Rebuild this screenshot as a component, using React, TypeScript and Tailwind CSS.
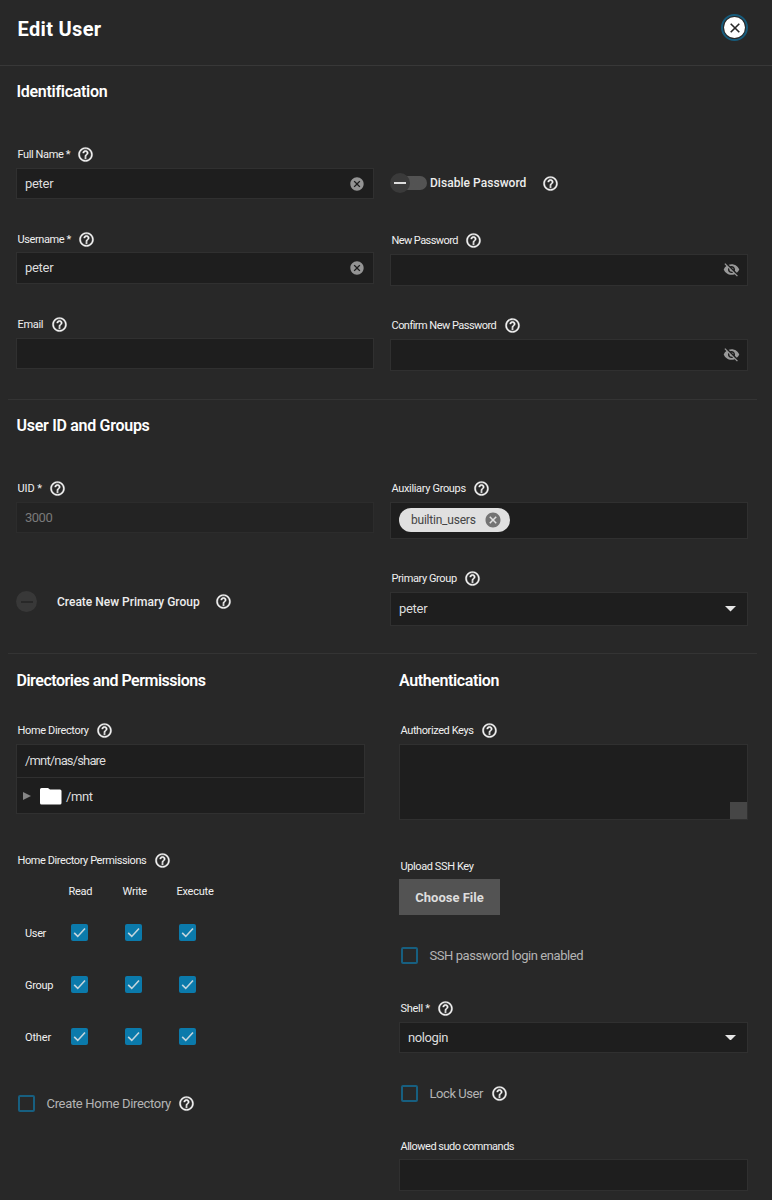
import type { ReactNode } from "react";
import { MdCancel, MdVisibilityOff } from "react-icons/md";

const Help = ({ className = "ml-[7.5px]" }: { className?: string }) => (
  <svg width="17" height="17" viewBox="0 0 24 24" strokeWidth="0.5" className={`shrink-0 fill-[#f5f5f5] stroke-[#f5f5f5] ${className}`}>
    <path d="M11 18h2v-2h-2v2zm1-16C6.480 2 2 6.480 2 12s4.480 10 10 10 10-4.480 10-10S17.520 2 12 2zm0 18c-4.410 0-8-3.590-8-8s3.590-8 8-8 8 3.590 8 8-3.590 8-8 8zm0-14c-2.210 0-4 1.790-4 4h2c0-1.100.9-2 2-2s2 .9 2 2c0 2-3 1.750-3 5h2c0-2.250 3-2.500 3-5 0-2.210-1.790-4-4-4z" />
  </svg>
);

function Label({ text, className = "", help = true, track = "tracking-[-0.4px]" }: { text: string; className?: string; help?: boolean; track?: string }) {
  return (
    <div className={`flex h-[17px] items-center pl-[1.5px] text-[11px] text-[#f0f0f0] ${className}`}>
      <span className={`pt-[2px] ${track}`}>{text}</span>
      {help && <Help />}
    </div>
  );
}

function Box({ children, className = "" }: { children?: ReactNode; className?: string }) {
  return (
    <div className={`flex items-center border border-[#303030] bg-[#1e1e1e] text-[13px] text-[#dcdcdc] ${className}`}>
      {children}
    </div>
  );
}

function Heading({ text, className }: { text: string; className: string }) {
  return <h2 className={`h-[21px] text-[16px] leading-[21px] font-semibold text-white ${className}`}>{text}</h2>;
}

const Arrow = () => (
  <svg width="11" height="5.5" viewBox="0 0 10 5" className="mr-[11px] ml-auto fill-[#e6e6e6]">
    <path d="M0 0h10L5 5z" />
  </svg>
);

const Checked = () => (
  <span className="flex size-[17px] items-center justify-center rounded-[2px] bg-[#0b7aab]">
    <svg width="15" height="15" viewBox="0 0 24 24" fill="none" stroke="#c3d5dd" strokeWidth="2.6">
      <path d="M3.5 12.7l5.7 5.6L20.8 5.6" />
    </svg>
  </span>
);

const Unchecked = () => <span className="size-[17px] shrink-0 rounded-[2px] border-2 border-[#175f80]" />;

const rows = [
  { name: "User", className: "mt-[25px]", track: "tracking-[-0.34px]" },
  { name: "Group", className: "mt-[35px]", track: "tracking-[-0.32px]" },
  { name: "Other", className: "mt-[35px]", track: "tracking-[-0.16px]" },
];

export default function App() {
  return (
    <div className="h-[1200px] w-[772px] overflow-hidden bg-[#282828] font-['Roboto',sans-serif] whitespace-nowrap">
      <header className="flex h-[66px] items-center justify-between border-b border-[#383838] pr-[24px] pb-[10px] pl-[17.5px]">
        <h1 className="pt-[2px] text-[20px] font-bold tracking-[0.34px] text-white">Edit User</h1>
        <button className="flex size-[27px] items-center justify-center rounded-full border-2 border-[#175b7b]">
          <span className="flex size-[21px] items-center justify-center rounded-full bg-white">
            <svg width="10" height="10" viewBox="0 0 10 10" stroke="#282828" strokeWidth="1.6">
              <path d="M.7.7l8.6 8.6M9.3.7L.7 9.3" />
            </svg>
          </span>
        </button>
      </header>

      <section className="h-[333px] pt-[15px] pl-4">
        <Heading text="Identification" className="pl-[0.5px] tracking-[-0.3px]" />
        <div className="flex gap-4">
          <div className="w-[358px]">
            <Label text="Full Name *" className="mt-11" />
            <Box className="mt-[5px] h-[31px] justify-between pr-2 pl-2">
              <span className="tracking-[-0.3px]">peter</span>
              <MdCancel size={16} className="text-[#949494]" />
            </Box>
            <Label text="Username *" className="mt-8" />
            <Box className="mt-1 h-8 justify-between pr-2 pl-2">
              <span className="tracking-[-0.3px]">peter</span>
              <MdCancel size={16} className="text-[#949494]" />
            </Box>
            <Label text="Email" className="mt-8" track="tracking-[-0.3px]" />
            <Box className="mt-[5px] h-[31px]" />
          </div>
          <div className="w-[358px]">
            <div className="mt-[71px] flex h-5 items-center">
              <span className="flex h-[14px] w-[37px] items-center rounded-full bg-linear-to-r from-transparent from-25% to-[#535353] to-25%">
                <span className="flex size-5 items-center justify-center rounded-full bg-[#3a3a3a]">
                  <span className="h-[2px] w-3 bg-[#dddddd]" />
                </span>
              </span>
              <span className="ml-[3px] w-[97px] text-[12px] font-medium tracking-[0.04px] text-[#ededed]">Disable Password</span>
              <Help className="ml-[15px]" />
            </div>
            <Label text="New Password" className="mt-[39px]" track="tracking-[-0.58px]" />
            <Box className="mt-[5px] h-8 justify-end pr-[7px] pb-px">
              <MdVisibilityOff size={17} className="text-[#999999]" />
            </Box>
            <Label text="Confirm New Password" className="mt-[31px]" track="tracking-[-0.53px]" />
            <Box className="mt-[5px] h-8 justify-end pr-[7px] pb-px">
              <MdVisibilityOff size={17} className="text-[#999999]" />
            </Box>
          </div>
        </div>
      </section>

      <div className="mr-[15px] ml-2 h-px bg-[#343434]" />

      <section className="h-[253px] pt-[15px] pl-4">
        <Heading text="User ID and Groups" className="pl-[0.5px] tracking-[-0.29px]" />
        <div className="flex gap-4">
          <div className="w-[358px]">
            <Label text="UID *" className="mt-11" track="tracking-[-0.1px]" />
            <div className="mt-[5px] flex h-[31px] items-center border border-[#2c2c2c] bg-[#232323] pl-2 text-[13px] tracking-[-0.5px] text-[#7a7a7a]">
              3000
            </div>
            <div className="mt-[58px] flex h-[21px] items-center">
              <span className="flex size-[21px] items-center justify-center rounded-full bg-[#383838]">
                <span className="h-[2px] w-3 bg-[#282828]" />
              </span>
              <span className="ml-5 w-[144px] text-[12px] font-medium text-[#ededed]">Create New Primary Group</span>
              <Help className="ml-[14px]" />
            </div>
          </div>
          <div className="w-[358px]">
            <Label text="Auxiliary Groups" className="mt-11" track="tracking-[-0.34px]" />
            <Box className="mt-[5px] h-[37px] pb-[2px] pl-2">
              <span className="flex h-6 w-[111px] items-center rounded-full bg-[#e0e0e0] pr-2 pl-3 text-[12px] text-[#444444]">
                <span className="tracking-[-0.22px]">builtin_users</span>
                <MdCancel size={18} className="ml-auto text-[#737373]" />
              </span>
            </Box>
            <Label text="Primary Group" className="mt-[31px]" track="tracking-[-0.4px]" />
            <Box className="mt-[5px] h-[34px] pl-2">
              <span className="tracking-[-0.3px]">peter</span>
              <Arrow />
            </Box>
          </div>
        </div>
      </section>

      <div className="mr-[15px] ml-2 h-px bg-[#343434]" />

      <section className="flex gap-[34px] pt-4 pl-4">
        <div className="w-[349px]">
          <Heading text="Directories and Permissions" className="pl-[0.5px] tracking-[-0.48px]" />
          <Label text="Home Directory" className="mt-[31px]" track="tracking-[-0.36px]" />
          <Box className="mt-[5px] h-[34px] pl-2">
            <span className="tracking-[-0.85px]">/mnt/nas/share</span>
          </Box>
          <Box className="h-9 border-t-0 pl-[6px]">
            <svg width="8" height="8" viewBox="0 0 8 8" className="mt-px fill-[#858585]">
              <path d="M0 0l8 4-8 4z" />
            </svg>
            <svg width="22" height="17" viewBox="0 0 22 17" className="mt-px ml-[9px] fill-white">
              <path d="M1.500 0H8l2 1.500h10a1.500 1.500 0 0 1 1.500 1.500v12a1.500 1.500 0 0 1-1.500 1.500H1.500A1.500 1.500 0 0 1 0 15V1.500A1.500 1.500 0 0 1 1.500 0z" />
            </svg>
            <span className="ml-1 pt-[2px] tracking-[-0.4px]">/mnt</span>
          </Box>
          <Label text="Home Directory Permissions" className="mt-[38px]" track="tracking-[-0.42px]" />
          <div className="mt-[13px] grid h-[17px] grid-cols-[54px_54px_60px] items-center pl-[52.5px] text-[11px] leading-[15px] text-[#f0f0f0]">
            <span className="pt-px tracking-[-0.32px]">Read</span>
            <span className="pt-px tracking-[-0.2px]">Write</span>
            <span className="pt-px tracking-[-0.24px]">Execute</span>
          </div>
          {rows.map((r) => (
            <div key={r.name} className={`grid h-[17px] grid-cols-[46px_54px_54px_54px] items-center pl-[9px] text-[11px] leading-[15px] text-[#f0f0f0] ${r.className}`}>
              <span className={`pt-[2px] ${r.track}`}>{r.name}</span>
              <Checked />
              <Checked />
              <Checked />
            </div>
          ))}
          <div className="mt-[50px] flex h-[17px] items-center pl-[2px] text-[13px] text-[#b4b4b4]">
            <Unchecked />
            <span className="ml-[11.5px] tracking-[-0.32px]">Create Home Directory</span>
            <Help />
          </div>
        </div>
        <div className="w-[349px]">
          <Heading text="Authentication" className="tracking-[-0.38px]" />
          <Label text="Authorized Keys" className="mt-[31px]" track="tracking-[-0.4px]" />
          <Box className="mt-[5px] h-[76px] items-end justify-end">
            <span className="size-[17px] bg-[#464646]" />
          </Box>
          <Label text="Upload SSH Key" className="mt-[38px]" help={false} />
          <button className="mt-1 flex h-9 w-[101px] items-center justify-center bg-[#535353] pt-[2px] text-[13px] font-bold text-[#dedede]">
            Choose File
          </button>
          <div className="mt-8 flex h-[17px] items-center pl-[2px] text-[13px] text-[#b4b4b4]">
            <Unchecked />
            <span className="ml-[11.5px] tracking-[-0.44px]">SSH password login enabled</span>
          </div>
          <Label text="Shell *" className="mt-9" track="tracking-[-0.3px]" />
          <Box className="mt-[5px] h-[31px] pl-2">
            <span className="tracking-[-0.4px]">nologin</span>
            <Arrow />
          </Box>
          <div className="mt-8 flex h-[17px] items-center pl-[2px] text-[13px] text-[#b4b4b4]">
            <Unchecked />
            <span className="ml-[11.5px] tracking-[-0.44px]">Lock User</span>
            <Help />
          </div>
          <Label text="Allowed sudo commands" className="mt-9" help={false} track="tracking-[-0.5px]" />
          <Box className="mt-1 h-8" />
        </div>
      </section>
    </div>
  );
}
